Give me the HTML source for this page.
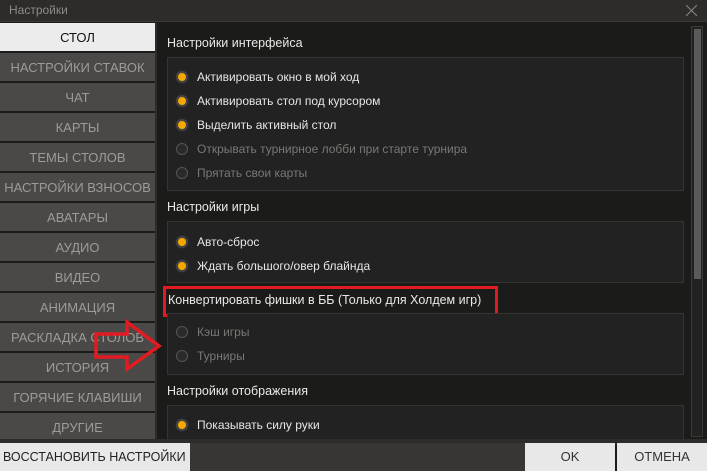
<!DOCTYPE html>
<html><head><meta charset="utf-8"><style>
*{margin:0;padding:0;box-sizing:border-box}
body{width:707px;height:471px;background:#1b1b19;font-family:"Liberation Sans","DejaVu Sans",sans-serif;position:relative;overflow:hidden}
.title{position:absolute;left:0;top:0;width:707px;height:22px;background:#2d2c2a;border-bottom:1px solid #3a3936;color:#8d8b87;font-size:12px;line-height:21px;padding-left:9px}
.x{position:absolute;right:10px;top:5px}
.nav div{position:absolute;left:0;width:155px;height:28px;background:#4a4947;color:#9d9b97;font-size:13px;text-align:center;line-height:29px;white-space:nowrap}
.nav div.on{background:#ececec;color:#111}
.h{position:absolute;left:167px;color:#e8e8e8;font-size:12.5px}
.box{position:absolute;left:167px;width:517px;background:#222;border:1px solid #353432}
.r{position:absolute;left:176px;font-size:12px;color:#e6e6e6;white-space:nowrap}
.r i{display:inline-block;width:12px;height:12px;border-radius:50%;vertical-align:-2px;margin-right:9px;border:1px solid #555;background:#2a2a2a}
.r.a i{background:#f6a800;border:2px solid #444;box-shadow:0 0 0 1px #2a2a2a}
.r.d{color:#7a7875}
.sb{position:absolute;left:691px;top:26px;width:12px;height:411px;border:1px solid #3a3936;background:#222}
.th{position:absolute;left:2px;top:2px;width:7px;height:250px;background:#5a5a5a}
.btn{position:absolute;top:443px;height:28px;background:#e8e8e8;color:#333;font-size:13px;line-height:28px;text-align:center;white-space:nowrap;overflow:hidden}
</style></head><body>
<div class="title">Настройки<svg class="x" width="11" height="11"><path d="M0 0L11 11M11 0L0 11" stroke="#888" stroke-width="1"/></svg></div>
<div class="nav">
<div class="on" style="top:23px">СТОЛ</div>
<div style="top:53px">НАСТРОЙКИ СТАВОК</div>
<div style="top:83px">ЧАТ</div>
<div style="top:113px">КАРТЫ</div>
<div style="top:143px">ТЕМЫ СТОЛОВ</div>
<div style="top:173px">НАСТРОЙКИ ВЗНОСОВ</div>
<div style="top:203px">АВАТАРЫ</div>
<div style="top:233px">АУДИО</div>
<div style="top:263px">ВИДЕО</div>
<div style="top:293px">АНИМАЦИЯ</div>
<div style="top:323px">РАСКЛАДКА СТОЛОВ</div>
<div style="top:353px">ИСТОРИЯ</div>
<div style="top:383px">ГОРЯЧИЕ КЛАВИШИ</div>
<div style="top:413px">ДРУГИЕ</div>
</div>
<div style="position:absolute;left:155px;top:23px;width:2px;height:420px;background:#2d2c2a"></div>
<div class="h" style="top:36px">Настройки интерфейса</div>
<div class="box" style="top:57px;height:134px"></div>
<div class="r a" style="top:70px"><i></i>Активировать окно в мой ход</div>
<div class="r a" style="top:94px"><i></i>Активировать стол под курсором</div>
<div class="r a" style="top:118px"><i></i>Выделить активный стол</div>
<div class="r d" style="top:142px"><i></i>Открывать турнирное лобби при старте турнира</div>
<div class="r d" style="top:166px"><i></i>Прятать свои карты</div>
<div class="h" style="top:200px">Настройки игры</div>
<div class="box" style="top:221px;height:62px"></div>
<div class="r a" style="top:235px"><i></i>Авто-сброс</div>
<div class="r a" style="top:259px"><i></i>Ждать большого/овер блайнда</div>
<div class="h" style="top:293px;left:168px">Конвертировать фишки в ББ (Только для Холдем игр)</div>
<div style="position:absolute;left:163px;top:286px;width:335px;height:31px;border:3px solid #e21b23"></div>
<div class="box" style="top:313px;height:62px"></div>
<div class="r d" style="top:325px"><i></i>Кэш игры</div>
<div class="r d" style="top:349px"><i></i>Турниры</div>
<div class="h" style="top:384px">Настройки отображения</div>
<div class="box" style="top:405px;height:40px"></div>
<div class="r a" style="top:418px"><i></i>Показывать силу руки</div>
<div class="sb"><div class="th"></div></div>
<svg style="position:absolute;left:0;top:0" width="707" height="471"><path d="M96 334H127V322L159 346L127 369V357H96Z" fill="none" stroke="#e21b23" stroke-width="3.5"/></svg>
<div style="position:absolute;left:0;top:439px;width:707px;height:4px;background:#2d2c2a"></div>
<div style="position:absolute;left:190px;top:443px;width:335px;height:28px;background:#383633"></div>
<div class="btn" style="left:0;width:190px;color:#222;text-align:left;padding-left:3px;font-size:12.5px">ВОССТАНОВИТЬ НАСТРОЙКИ</div>
<div class="btn" style="left:525px;width:90px">OK</div>
<div class="btn" style="left:617px;width:90px">ОТМЕНА</div>
</body></html>
